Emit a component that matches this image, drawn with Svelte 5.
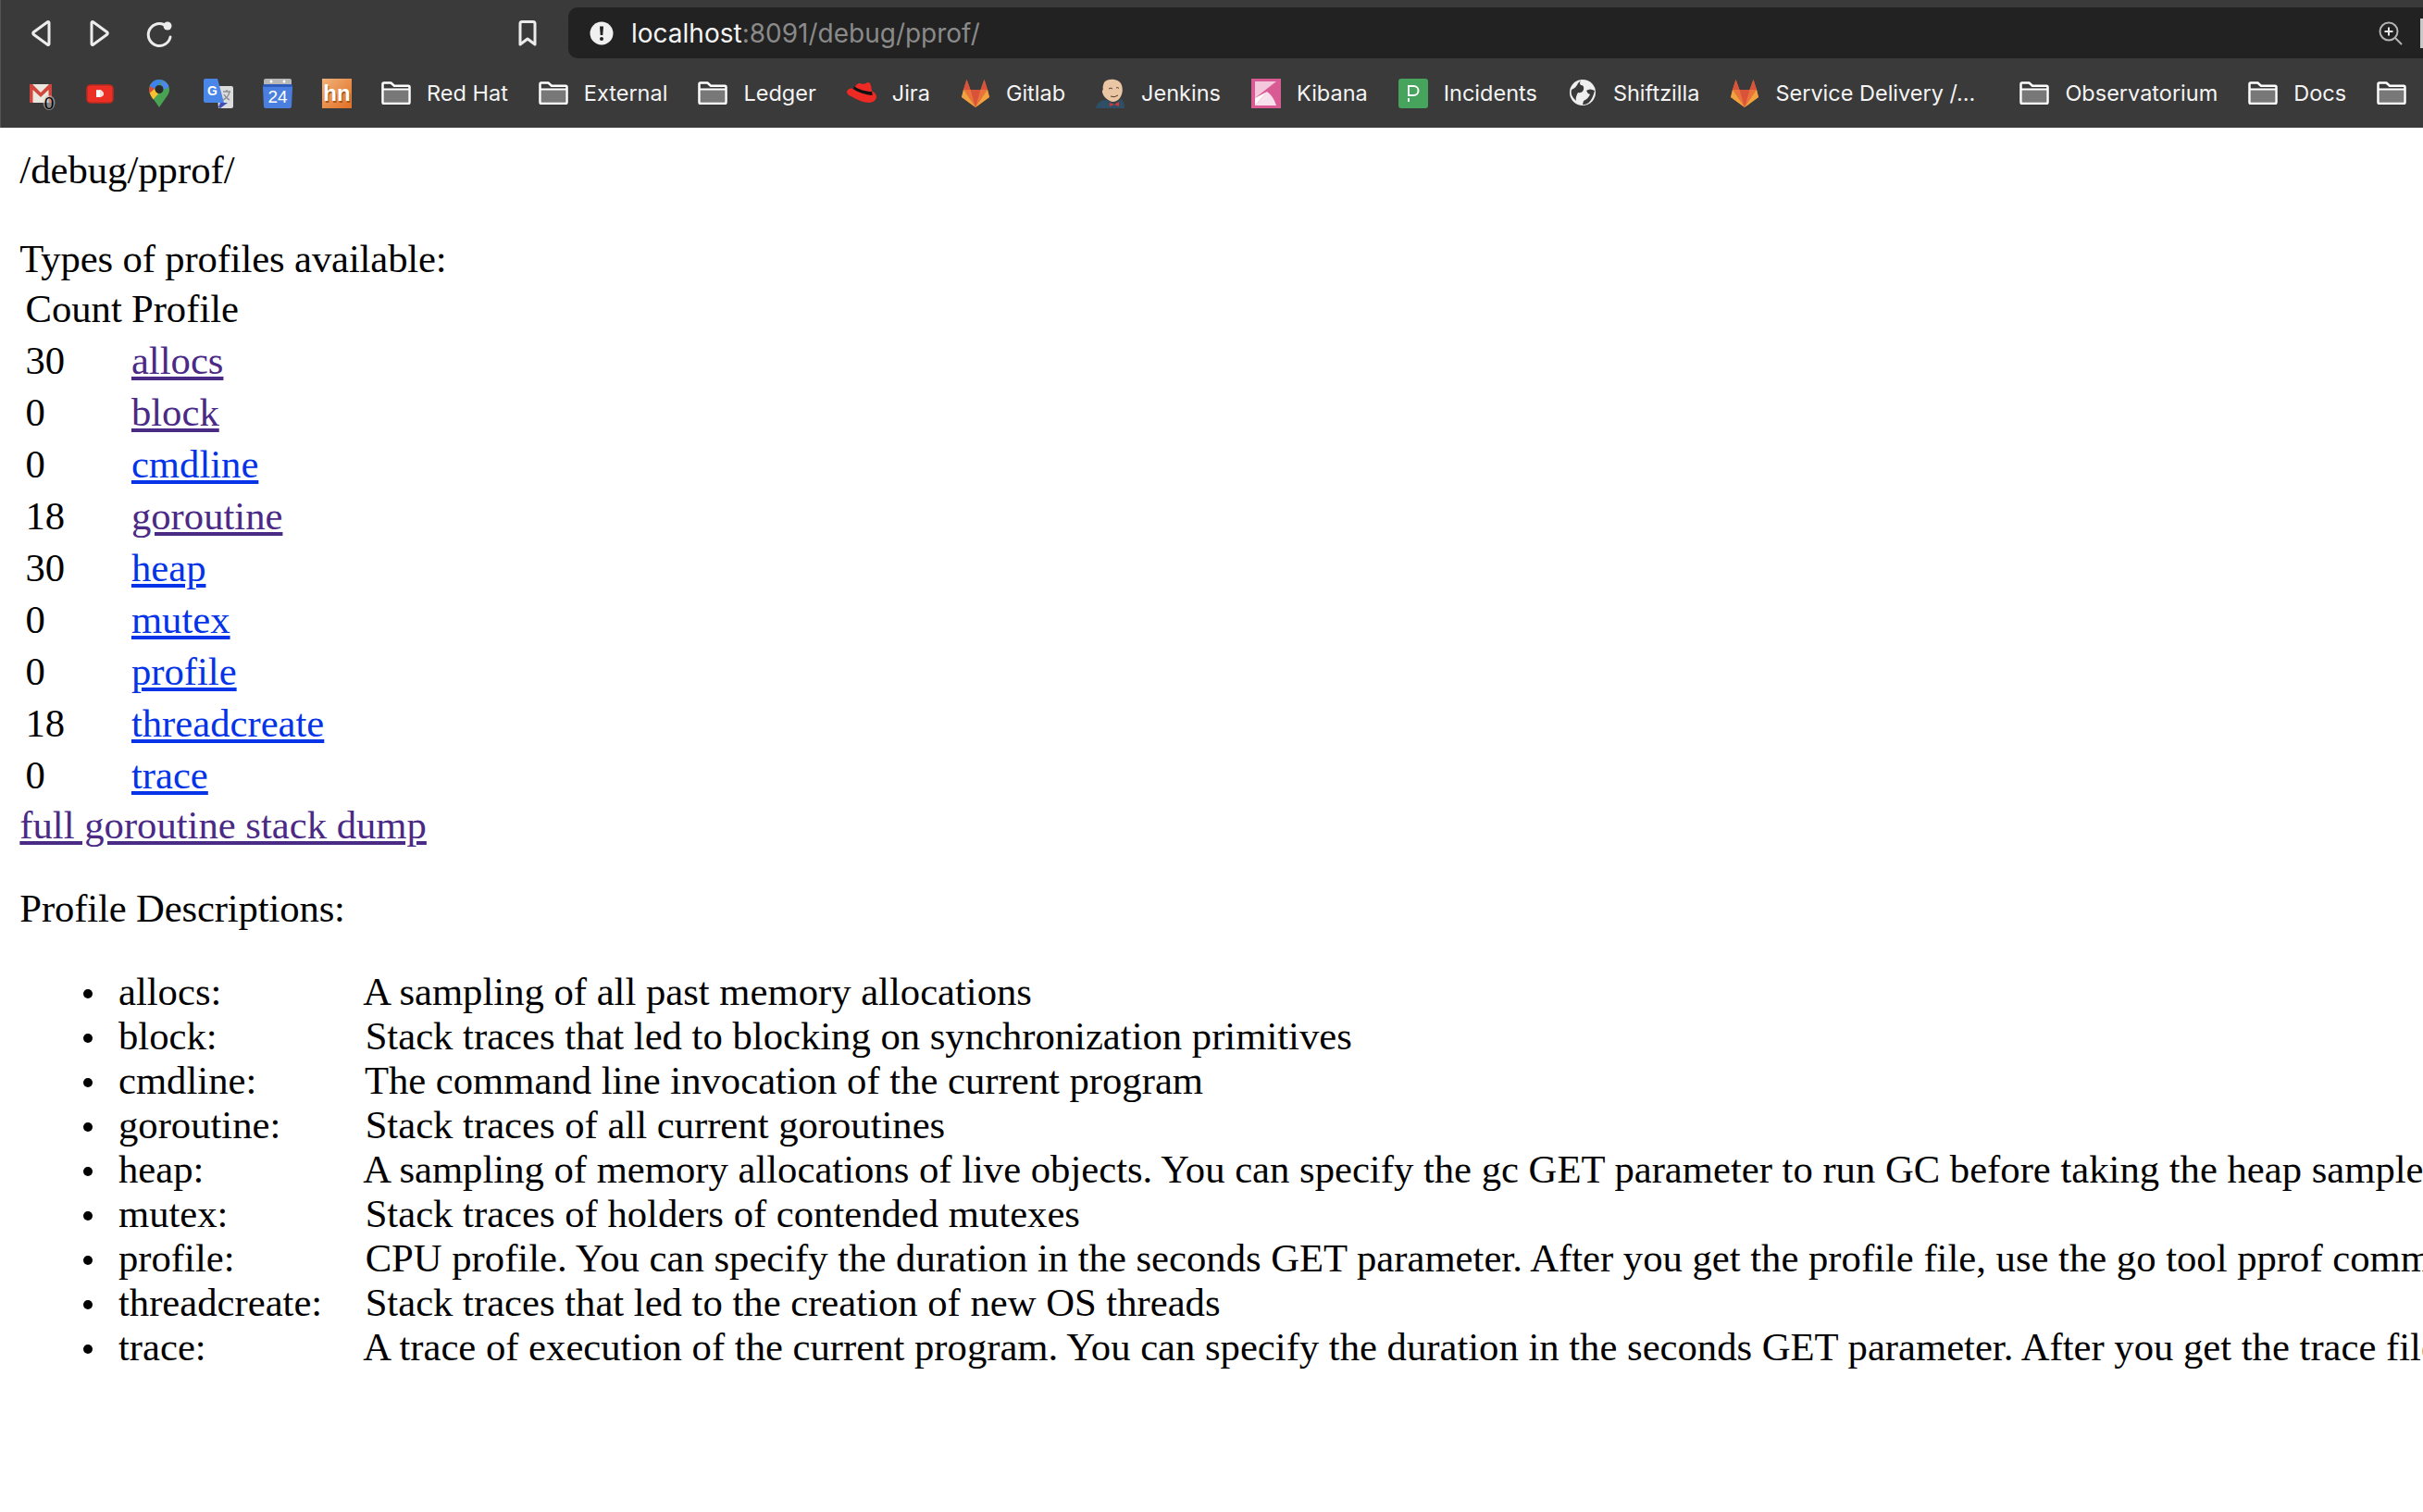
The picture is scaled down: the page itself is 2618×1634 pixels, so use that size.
<script lang="ts">
  type Bookmark = { icon: string; label?: string; truncated?: boolean };

  const bookmarks: Bookmark[] = [
    { icon: "gmail" },
    { icon: "youtube" },
    { icon: "maps" },
    { icon: "translate" },
    { icon: "calendar" },
    { icon: "hn" },
    { icon: "folder", label: "Red Hat" },
    { icon: "folder", label: "External" },
    { icon: "folder", label: "Ledger" },
    { icon: "redhat", label: "Jira" },
    { icon: "gitlab", label: "Gitlab" },
    { icon: "jenkins", label: "Jenkins" },
    { icon: "kibana", label: "Kibana" },
    { icon: "pagerduty", label: "Incidents" },
    { icon: "globe", label: "Shiftzilla" },
    { icon: "gitlab", label: "Service Delivery /...", truncated: true },
    { icon: "folder", label: "Observatorium" },
    { icon: "folder", label: "Docs" },
    { icon: "folder" },
  ];

  const profiles = [
    { name: "allocs", count: 30, visited: true, desc: "A sampling of all past memory allocations" },
    { name: "block", count: 0, visited: true, desc: "Stack traces that led to blocking on synchronization primitives" },
    { name: "cmdline", count: 0, visited: false, desc: "The command line invocation of the current program" },
    { name: "goroutine", count: 18, visited: true, desc: "Stack traces of all current goroutines" },
    { name: "heap", count: 30, visited: false, desc: "A sampling of memory allocations of live objects. You can specify the gc GET parameter to run GC before taking the heap sample." },
    { name: "mutex", count: 0, visited: false, desc: "Stack traces of holders of contended mutexes" },
    { name: "profile", count: 0, visited: false, desc: "CPU profile. You can specify the duration in the seconds GET parameter. After you get the profile file, use the go tool pprof command to investigate the profile." },
    { name: "threadcreate", count: 18, visited: false, desc: "Stack traces that led to the creation of new OS threads" },
    { name: "trace", count: 0, visited: false, desc: "A trace of execution of the current program. You can specify the duration in the seconds GET parameter. After you get the trace file, use the go tool trace command to investigate the trace." },
  ];
</script>

{#snippet gitlabIcon()}
  <path d="M16 31 1 20l2-8L6.500 1l4 11h11l4-11L29 12l2 8z" fill="#e8743b" />
  <path d="M16 31 10.500 12h11z" fill="#d9533a" />
  <path d="M6.500 1 3 12h7.500z M25.500 1 29 12h-7.500z" fill="#d9533a" />
  <path d="M3 12 1 20l15 11zM29 12l2 8-15 11z" fill="#f0a33e" />
{/snippet}

{#snippet icon(name: string)}
  <svg class="bm-icon" viewBox="0 0 32 32" aria-hidden="true">
    {#if name === "folder"}
      <path d="M3 11h26v14H3z" fill="#787878" />
      <path d="M1.500 25.500V5.800q0-1.300 1.300-1.300h7.600l3.600 3.200h15.200q1.300 0 1.300 1.300v16.500q0 1.300-1.300 1.300H2.800q-1.300 0-1.300-1.300z" fill="none" stroke="#fff" stroke-width="2.500" stroke-linejoin="round" />
      <path d="M1.500 11.500h29" stroke="#fff" stroke-width="2" />
    {:else if name === "gmail"}
      <path d="M4 6h24v20H4z" fill="#ece8df" />
      <path d="M4 6h3l9 9 9-9h3v20h-3.500V12L16 20 7.500 12v14H4z" fill="#d0453c" />
      <ellipse cx="25" cy="26" rx="6.500" ry="8" fill="#c8c8c8" opacity=".55" />
      <text x="25" y="32.500" class="badge">0</text>
    {:else if name === "youtube"}
      <rect x="1" y="6" width="30" height="21" rx="5" fill="#a52a22" />
      <rect x="2.500" y="7.500" width="27" height="18" rx="3" fill="#ec2f24" />
      <path d="M12 12h5l3 3v3l-3 2h-5z" fill="#f8dcd8" />
      <path d="M12 13h4v7h-4z" fill="#fff" />
    {:else if name === "maps"}
      <path d="M16 1C9 1 5 6.500 5 12c0 3.200 1.500 5.600 3.500 8.200L16 31l7.500-10.800c2-2.600 3.500-5 3.500-8.200C27 6.500 23 1 16 1z" fill="#48a353" />
      <path d="M6 8C7.500 3.800 11.500 1 16 1c1.300 0 2.500.2 3.600.7L11 11z" fill="#3e82f1" />
      <path d="M19.600 1.700C23 3 25.700 6 26.600 9L21 12l-3-6z" fill="#4e86ec" />
      <path d="M6 8l5 3-2 8.800C6.500 17 5 15 5 12c0-1.500.3-2.800 1-4z" fill="#d9493c" />
      <path d="M5.800 15.500 11 11l4 5.500-5.500 6q-2.500-3.500-3.700-7z" fill="#f7c132" />
      <circle cx="16" cy="11.500" r="4.500" fill="#2b2b2b" />
    {:else if name === "translate"}
      <path d="M14 8h16a2 2 0 0 1 2 2v20a2 2 0 0 1-2 2H16z" fill="#dcdcdc" />
      <path d="M18 26h8l-8 6-2-1z" fill="#3f4fb5" />
      <path d="M2 0h13l7 26H2a2 2 0 0 1-2-2V2a2 2 0 0 1 2-2z" fill="#4a86e8" />
      <text x="9.500" y="17.500" class="g-letter">G</text>
      <path d="M21 14h8m-4-2v2m3 0q-1 6-7 9m1-6q2 4 6 6" stroke="#8a8f96" stroke-width="1.500" fill="none" />
    {:else if name === "calendar"}
      <path d="M3 0h26a2 2 0 0 1 2 2v6H1V2a2 2 0 0 1 2-2z" fill="#b8b8b8" />
      <circle cx="9" cy="3" r="1.500" fill="#fff" />
      <circle cx="23" cy="3" r="1.500" fill="#fff" />
      <path d="M1 6h30l1 3-1 21a2 2 0 0 1-2 2H3a2 2 0 0 1-2-2L0 9z" fill="#4a7fe0" />
      <path d="M1 6h30l1 3H0z" fill="#2f5dbd" />
      <text x="16" y="26" class="cal-day">24</text>
    {:else if name === "hn"}
      <defs>
        <linearGradient id="hn-bg" x1="0" y1="0" x2="1" y2="1">
          <stop offset="0" stop-color="#f0b27a" />
          <stop offset="1" stop-color="#e26e22" />
        </linearGradient>
      </defs>
      <rect width="32" height="32" fill="url(#hn-bg)" />
      <text x="17" y="26" class="hn-text shadow">hn</text>
      <text x="16" y="24" class="hn-text">hn</text>
    {:else if name === "redhat"}
      <path d="M8 12C9 8 10 6 13 5c2-.5 3 .8 5 .8 2.500 0 3-1.800 5-1.800 2.500 0 3.500 4 4 9.500 3 1.200 5 3.500 5 6 0 3.500-3.500 6.500-8 6.500-6 0-13-3-18-6.200C2.500 18.500 0 16.500 0 14.500 0 12 3 10.500 5 10.500c1 0 2 .6 3 1.500z" fill="#ee2a24" />
      <path d="M7 11C12 15 20 17.500 27.700 18l-.6-4C20 14 13 11.500 8 8.500z" fill="#111" />
    {:else if name === "gitlab"}
      {@render gitlabIcon()}
    {:else if name === "jenkins"}
      <path d="M0 32c1-6 6-9 11-9l9 4 8-5c2 3 3 6 3 10z" fill="#2f4f66" />
      <path d="M9 4C13-1 24 0 27 5c3 5 2 12-1 16-3 4-8 5-11 3-4-2-7-5-8-9-2-1-2-5 0-5z" fill="#eac6a4" />
      <path d="M9 3C5 5 4 9 4.500 12c.3 3 1.500 6 3.500 8-1-3-1-5-1-7 1-1 1-2 .5-3.500C7 7 8 5 9 3z" fill="#3a3a3a" />
      <path d="M15 26l5 2 5-3v5l-5-2-5 2z" fill="#d33833" />
      <path d="M14 11q2-2 4 0M22 10q2-1 3 .5M16 19q4 2 8-1" stroke="#5a3d2b" stroke-width="1" fill="none" />
    {:else if name === "kibana"}
      <rect width="32" height="32" fill="#d95b94" />
      <path d="M4 3h23L4 21z" fill="#f3c7dc" />
      <path d="M4 29h23Q24 19 17 14z" fill="#f7e1ec" />
      <path d="M4 29 17 14 4 21z" fill="#fff" />
    {:else if name === "pagerduty"}
      <rect width="32" height="32" rx="3" fill="#47a45c" />
      <path d="M11 18V8h5.500a4.800 4.800 0 0 1 0 10z" fill="none" stroke="#fff" stroke-width="2" />
      <path d="M11 21v4" stroke="#fff" stroke-width="2" />
    {:else if name === "globe"}
      <circle cx="16" cy="15" r="14" fill="#efefef" />
      <path d="M4 12q5-2 7-7l3-3q-2 3 0 5 4 0 3 5-2 4-6 3-3 5-2 9Q2 18 4 12z" fill="#3a3a3a" />
      <path d="M29 13q-5-3-9 0 1 3 4 4-2 5-7 7l-1 4q9 1 13-15z" fill="#3a3a3a" />
    {/if}
  </svg>
{/snippet}

<div class="browser">
  <div class="top-row">
    <div class="nav">
      <svg class="nav-icon" viewBox="0 0 32 32" aria-hidden="true">
        <path d="M25 4.500v23a1 1 0 0 1-1.600.8L8.300 17.200a1.500 1.500 0 0 1 0-2.400L23.400 3.700A1 1 0 0 1 25 4.500z" />
      </svg>
      <svg class="nav-icon" viewBox="0 0 32 32" aria-hidden="true">
        <path d="M7 4.500v23a1 1 0 0 0 1.600.8l15.100-11.100a1.500 1.500 0 0 0 0-2.400L8.600 3.700A1 1 0 0 0 7 4.500z" />
      </svg>
      <svg class="nav-icon" viewBox="0 0 32 32" aria-hidden="true">
        <path d="M21 6.500A12 12 0 1 0 28 20" />
        <circle class="dot" cx="25" cy="8" r="4.500" />
      </svg>
    </div>
    <svg class="nav-icon bookmark" viewBox="0 0 32 32" aria-hidden="true">
      <path d="M8 5.500a2 2 0 0 1 2-2h12a2 2 0 0 1 2 2v22.500l-8-6-8 6z" />
    </svg>
    <div class="address">
      <svg class="info" viewBox="0 0 26 26" aria-hidden="true">
        <circle cx="13" cy="13" r="12.500" fill="#f0f0f0" />
        <path d="M11 5.500h4l-.7 9.500h-2.600z" fill="#222" />
        <circle cx="13" cy="19" r="2" fill="#222" />
      </svg>
      <span class="url"><span class="host">localhost</span>:8091/debug/pprof/</span>
      <svg class="zoom-icon" viewBox="0 0 26 26" aria-hidden="true">
        <circle cx="11" cy="11" r="9.500" />
        <path d="M11 6.500v9M6.500 11h9" stroke="#e8e8e8" />
        <path d="M18 18l7 7" />
      </svg>
      <span class="divider"></span>
    </div>
  </div>
  <div class="bookmarks">
    {#each bookmarks as b}
      <div class="bookmark-item">
        {@render icon(b.icon)}
        {#if b.label}<span class="bm-label" class:truncated={b.truncated}>{b.label}</span>{/if}
      </div>
    {/each}
  </div>
</div>

<main class="page">
  /debug/pprof/<br />
  <br />
  <span class="tight">Types of profiles available:</span>
  <table>
    <thead>
      <tr><td>Count</td><td>Profile</td></tr>
    </thead>
    <tbody>
      {#each profiles as p}
        <tr>
          <td>{p.count}</td>
          <td><a class:visited={p.visited} href="#{p.name}">{p.name}</a></td>
        </tr>
      {/each}
    </tbody>
  </table>
  <a class="visited" href="#full">full goroutine stack dump</a>
  <br />
  <p class="tight">Profile Descriptions:</p>
  <ul>
    {#each profiles as p}
      <li><div class="profile-name">{p.name}: </div> {p.desc}</li>
    {/each}
  </ul>
</main>

<style>
  :global(html), :global(body) {
    margin: 0;
    background: #fff;
    overflow: hidden;
  }

  .browser {
    background: #3a3a3a;
    height: 138px;
    box-sizing: border-box;
    border-left: 1px solid #555;
    font-family: Inter, "Liberation Sans", sans-serif;
    color: #f4f4f4;
    overflow: hidden;
  }

  .top-row {
    display: flex;
    align-items: center;
    height: 55px;
    padding-top: 8px;
  }

  .nav {
    display: flex;
    gap: 32px;
    padding-left: 27px;
  }

  .nav-icon {
    width: 32px;
    height: 32px;
    flex: none;
    fill: none;
    stroke: #ececec;
    stroke-width: 3;
    stroke-linecap: round;
    stroke-linejoin: round;
  }

  .nav-icon .dot {
    fill: #ececec;
    stroke: none;
  }

  .bookmark {
    margin-left: 366px;
  }

  .address {
    flex: 1;
    display: flex;
    align-items: center;
    height: 55px;
    margin-left: 28px;
    padding-left: 23px;
    background: #222;
    border-radius: 10px 0 0 10px;
  }

  .info {
    width: 26px;
    height: 26px;
    flex: none;
    margin-right: 19px;
  }

  .url {
    font-size: 28px;
    color: #8a8a8a;
    white-space: nowrap;
  }

  .host {
    color: #f4f4f4;
  }

  .zoom-icon {
    width: 26px;
    height: 26px;
    margin-left: auto;
    fill: none;
    stroke: #b4b4b4;
    stroke-width: 2;
  }

  .divider {
    width: 3px;
    height: 32px;
    margin-left: 19px;
    background: #c8c8c8;
  }

  .bookmarks {
    display: flex;
    align-items: center;
    gap: 32px;
    height: 75px;
    padding-left: 27px;
    white-space: nowrap;
  }

  .bookmark-item {
    display: flex;
    align-items: center;
    flex: none;
  }

  .bm-icon {
    width: 32px;
    height: 32px;
    flex: none;
    overflow: visible;
  }

  .bm-label {
    margin: 0 1px 1px 17px;
    font-size: 23.5px;
  }

  .bm-label.truncated {
    margin-right: 16px;
  }

  .badge {
    font: 19px "Liberation Sans", sans-serif;
    fill: #000;
    text-anchor: middle;
  }

  .g-letter {
    font: 700 14px "Liberation Sans", sans-serif;
    fill: #fff;
    text-anchor: middle;
  }

  .cal-day {
    font: 19px "Liberation Sans", sans-serif;
    fill: #fff;
    text-anchor: middle;
  }

  .hn-text {
    font: 700 24px "Liberation Sans", sans-serif;
    fill: #fff;
    text-anchor: middle;
  }

  .hn-text.shadow {
    fill: #a8581c;
  }

  .page {
    padding: 22px 21.33px 0;
    font-family: "Liberation Serif", "Times New Roman", serif;
    font-size: 42.67px;
    line-height: 48px;
    color: #000;
    white-space: nowrap;
  }

  .tight {
    letter-spacing: -0.13px;
  }

  table {
    margin-left: 1.5px;
    border-collapse: separate;
    border-spacing: 2.67px 4px;
  }

  td {
    padding: 2px 2.67px;
  }

  td:first-child {
    padding-right: 5.5px;
  }

  a {
    color: #0433e8;
    text-decoration: underline;
  }

  a.visited {
    color: #4b2a86;
  }

  p {
    margin: 41.67px 0 42.67px;
  }

  ul {
    margin: 42.67px 0;
    padding-left: 106.67px;
    list-style: none;
  }

  li {
    position: relative;
  }

  li::before {
    content: "";
    position: absolute;
    left: -38px;
    top: 21px;
    width: 10px;
    height: 10px;
    border-radius: 50%;
    background: #000;
  }

  .profile-name {
    display: inline-block;
    width: 256px;
  }
</style>
